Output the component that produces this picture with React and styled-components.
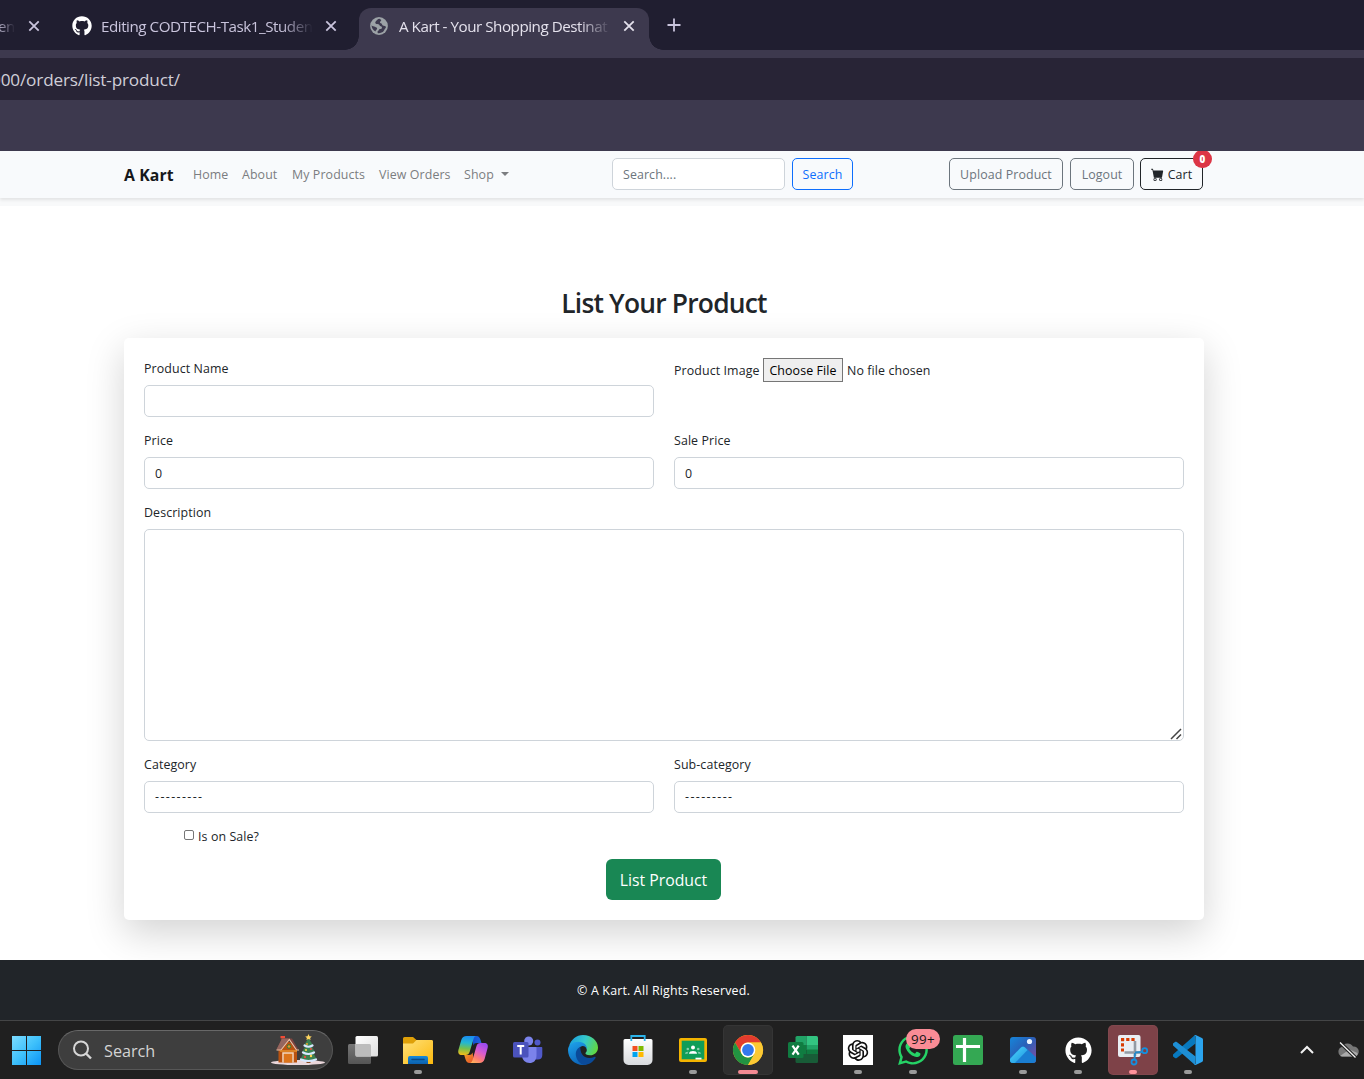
import React from "react";
import styled, { createGlobalStyle } from "styled-components";
import { FaGithub, FaWhatsapp } from "react-icons/fa";
import { BsCartFill } from "react-icons/bs";
import { AiOutlineOpenAI } from "react-icons/ai";

const GlobalStyle = createGlobalStyle`
  *, *::before, *::after { box-sizing: border-box; }
  body {
    margin: 0;
    overflow: hidden;
    background: #fff;
    color: #212529;
    font-family: "Open Sans", "Noto Sans", sans-serif;
    font-size: 12.4px;
    line-height: 20px;
    letter-spacing: 0.1px;
  }
  input, select, textarea, button { font: inherit; letter-spacing: inherit; color: inherit; }
`;

const Screen = styled.div`
  width: 1364px;
  height: 1079px;
  display: flex;
  flex-direction: column;
  overflow: hidden;
`;

/* Browser chrome */
const TabStrip = styled.div`
  height: 50px;
  flex: none;
  display: flex;
  align-items: flex-end;
  background: #201e30;
  color: #c9c4dc;
  font-size: 15.2px;
  letter-spacing: -0.47px;
`;
const Tab = styled.div`
  position: relative;
  width: ${(p) => p.$w}px;
  height: 42px;
  padding: 0 ${(p) => p.$pr || 14}px 7px ${(p) => p.$pl}px;
  display: flex;
  align-items: center;
  border-radius: 12px 12px 0 0;
  background: ${(p) => (p.$active ? "#3d394e" : "transparent")};
  color: ${(p) => (p.$active ? "#e4e1ec" : "inherit")};
  &::before, &::after {
    content: "";
    display: ${(p) => (p.$active ? "block" : "none")};
    position: absolute;
    bottom: 0;
    width: 14px;
    height: 14px;
  }
  &::before { left: -14px; background: radial-gradient(circle at 0 0, transparent 13.5px, #3d394e 14px); }
  &::after { right: -14px; background: radial-gradient(circle at 100% 0, transparent 13.5px, #3d394e 14px); }
`;
const TabTitle = styled.span`
  width: ${(p) => p.$w}px;
  margin-left: ${(p) => p.$ml}px;
  white-space: nowrap;
  mask-image: linear-gradient(to right, #000 calc(100% - ${(p) => p.$fade || 32}px), transparent);
`;
const TabClose = styled.svg`
  width: 12px;
  height: 12px;
  margin-left: auto;
  flex: none;
`;
const NewTab = styled.svg`
  width: 14px;
  height: 14px;
  margin: 0 0 18px 18px;
`;
const Toolbar = styled.div`
  height: 101px;
  flex: none;
  padding-top: 8px;
  background: #3d394e;
`;
const AddressBar = styled.div`
  height: 42px;
  display: flex;
  align-items: center;
  padding-top: 1px;
  background: #282436;
  color: #d0ced8;
  font-size: 17.2px;
  letter-spacing: -0.17px;
  text-indent: -9px;
  white-space: nowrap;
`;

/* Site header */
const Header = styled.header`
  height: 55px;
  flex: none;
  background: #f8f9fa;
  overflow: hidden;
`;
const Navbar = styled.nav`
  height: 47px;
  display: flex;
  align-items: center;
  padding: 0 161px 0 124px;
  background: #f8fafc;
  box-shadow: 0 1.6px 3.2px rgba(0, 0, 0, 0.09);
`;
const Brand = styled.span`
  width: 69px;
  font-size: 15.8px;
  font-weight: 700;
  color: #16181b;
`;
const NavLinks = styled.div`
  display: flex;
  gap: 13px;
  width: 419px;
  color: #7b7d80;
  white-space: nowrap;
`;
const NavLink = styled.span`
  width: ${(p) => (p.$w ? p.$w + "px" : "auto")};
`;
const Caret = styled.i`
  display: inline-block;
  margin-left: 4px;
  vertical-align: 3px;
  border: 4px solid transparent;
  border-top-color: currentColor;
  border-bottom: 0;
`;
const SearchInput = styled.input`
  width: 173px;
  height: 32px;
  margin: 0 7px 2px 0;
  padding: 1px 10px 0;
  border: 1px solid #ced4da;
  border-radius: 5px;
  background: #fff;
  &::placeholder { color: #6c757d; opacity: 1; }
`;
const TONES = { blue: "#0d6efd", gray: "#6c757d", dark: "#212529" };
const OutlineButton = styled.button`
  position: relative;
  width: ${(p) => p.$w}px;
  height: 32px;
  margin: 0 0 2px;
  padding: 2px 0 0;
  display: flex;
  align-items: center;
  justify-content: center;
  gap: 4px;
  border: 1px solid ${(p) => TONES[p.$tone]};
  border-radius: 5px;
  background: transparent;
  color: ${(p) => TONES[p.$tone]};
  white-space: nowrap;
`;
const NavActions = styled.div`
  display: flex;
  gap: 7px;
  margin-left: auto;
  & > :last-child { margin-left: -1px; }
`;
const CartBadge = styled.span`
  position: absolute;
  left: 52px;
  top: -9px;
  width: 19px;
  height: 18px;
  border-radius: 9px;
  background: #dc3545;
  color: #fff;
  font-size: 9.8px;
  font-weight: 800;
  line-height: 20px;
  text-align: center;
`;

/* Product form */
const Main = styled.main`
  height: 754px;
  flex: none;
  padding: 80px 160px 40px 124px;
  overflow: hidden;
`;
const Title = styled.h2`
  margin: 0 0 18px;
  font-size: 26.4px;
  font-weight: 600;
  line-height: 34px;
  letter-spacing: -0.8px;
  text-align: center;
`;
const Card = styled.form`
  height: 582px;
  padding: 20px;
  border-radius: 5px;
  background: #fff;
  box-shadow: 0 12.8px 38.4px rgba(0, 0, 0, 0.175);
`;
const Row = styled.div`
  display: grid;
  grid-template-columns: ${(p) => (p.$single ? "1fr" : "1fr 1fr")};
  column-gap: 20px;
  margin-bottom: 13px;
`;
const Field = styled.label`
  position: relative;
  display: flex;
  flex-direction: column;
  gap: 6px;
  padding-top: 1px;
`;
const Control = styled.input`
  display: block;
  width: 100%;
  height: 32px;
  padding: 0 10px;
  border: 1px solid #ced4da;
  border-radius: 5px;
  background: #fff;
  outline: none;
  appearance: none;
`;
const Select = styled(Control)`
  letter-spacing: 1.4px;
`;
const TextArea = styled(Control)`
  height: 212px;
  resize: none;
`;
const ResizeGrip = styled.svg`
  position: absolute;
  right: 2px;
  bottom: 1px;
  width: 12px;
  height: 12px;
`;
const FileField = styled.div`
  display: flex;
  align-items: center;
  height: 24px;
  white-space: nowrap;
`;
const FileText = styled.span`
  width: ${(p) => (p.$w ? p.$w + "px" : "auto")};
  padding-top: 1px;
`;
const FileButton = styled.button`
  width: 80px;
  height: 24px;
  margin: 0 4px 0 0;
  padding: 1px 0 0;
  border: 1px solid #767676;
  border-radius: 0;
  background: #efefef;
  color: #000;
`;
const CheckRow = styled.label`
  display: flex;
  align-items: center;
  height: 20px;
  margin: 0 0 13px 40px;
  padding-top: 2px;
`;
const CheckBox = styled.input`
  width: 10px;
  height: 10px;
  margin: 0 4px 4px 0;
  appearance: none;
  border: 1px solid #767676;
  border-radius: 2px;
`;
const Submit = styled.button`
  display: block;
  width: 115px;
  height: 41px;
  margin: 0 0 0 462px;
  padding: 0;
  border: 0;
  border-radius: 6px;
  background: #198754;
  color: #fff;
  font-size: 15.8px;
  letter-spacing: -0.02px;
`;
const Footer = styled.footer`
  height: 60px;
  flex: none;
  display: flex;
  align-items: center;
  justify-content: center;
  padding: 2px 37px 0 0;
  background: #212529;
  color: #fff;
  letter-spacing: 0.18px;
`;

/* Desktop taskbar */
const Taskbar = styled.div`
  height: 59px;
  flex: none;
  display: flex;
  align-items: center;
  padding-left: 12px;
  border-top: 1px solid #444546;
  background: #202020;
  letter-spacing: 0;
`;
const StartIcon = styled.svg`
  width: 29px;
  height: 29px;
  margin-right: 17px;
`;
const TaskSearch = styled.div`
  width: 275px;
  height: 40px;
  display: flex;
  align-items: center;
  padding: 0 6px 0 14px;
  border: 1px solid #575757;
  border-top-color: #686868;
  border-radius: 20px;
  background: #3e3e3e;
  color: #d4d4d4;
  font-size: 16.2px;
`;
const SearchText = styled.span`
  padding-top: 2px;
`;
const SearchGlyph = styled.svg`
  width: 20px;
  height: 20px;
  margin-right: 11px;
`;
const Festive = styled.svg`
  width: 56px;
  height: 32px;
  margin-left: auto;
`;
const Apps = styled.div`
  display: flex;
  gap: 5px;
  margin-left: 5px;
`;
const AppSlot = styled.div`
  position: relative;
  width: 50px;
  height: 50px;
  display: flex;
  align-items: center;
  justify-content: center;
  border-radius: 5px;
  background: ${(p) => p.$bg || "transparent"};
  box-shadow: ${(p) => (p.$bg ? "inset 0 0 0 1px rgba(255,255,255,.035)" : "none")};
`;
const AppIcon = styled.svg.attrs({ viewBox: "0 0 30 30" })`
  width: 30px;
  height: 30px;
  overflow: visible;
`;
const Indicator = styled.i`
  position: absolute;
  bottom: 1px;
  left: 50%;
  width: ${(p) => p.$w || 8}px;
  height: 4px;
  transform: translateX(-50%);
  border-radius: 2px;
  background: ${(p) => p.$color || "#9a9a9a"};
`;
const UnreadBadge = styled.span`
  position: absolute;
  left: 18px;
  top: 4px;
  width: 34px;
  height: 20px;
  border-radius: 10px;
  background: #f98c96;
  color: #141414;
  font-size: 13.4px;
  line-height: 20px;
  letter-spacing: 0.3px;
  text-align: center;
`;
const Tray = styled.div`
  display: flex;
  align-items: center;
  gap: 22px;
  margin-left: auto;
  margin-right: -6px;
`;
const TrayIcon = styled.svg`
  width: ${(p) => p.$w}px;
  height: 20px;
`;

const CloseIcon = () => (
  <TabClose viewBox="0 0 12 12" stroke="currentColor" strokeWidth="1.8">
    <path d="M1.3 1.3 10.7 10.7M10.7 1.3 1.3 10.7" />
  </TabClose>
);

const Globe = () => (
  <svg width="18" height="18" viewBox="0 0 18 18">
    <circle cx="9" cy="9" r="8.900" fill="#9ca2a6" />
    <path d="M9.500 1.800C7.500 1.900 7 3.400 5.700 4.400 4.900 5.200 5.200 6.500 6.400 6.900c1.500.3 2.700 0 3 1.200.1 1.600 2.400.9 2.600 2.300 0 1.100-1 1.400-2 1.500-1.300.2-1 1.500-2 2.200-.8.600-.6 1.400 0 2.100 2 .300 4.600-.8 5.700-2.200.8-1 .7-2.300 2-3.100.5-.9.100-1.900-.9-2-1.600-.1-2.700-.4-2.900-1.800-.2-1.200-1.900-.5-1.900-1.700 0-1.100 1.100-1.300 1.300-2.400ZM1.600 8.200c.8 1.200 2.400.9 3.400 1.600 1 .8 2.300.7 2.100 2-.4 1.200-1.600 1.600-1.700 2.700-2.500-1.300-3.900-3.800-3.800-6.300Z" fill="#3d394e" />
  </svg>
);

const GithubMark = () => <FaGithub size={20} color="#fff" />;

const TaskView = () => (
  <AppIcon>
    <defs>
      <linearGradient id="tvA" x2="1" y2="1"><stop stopColor="#fff" /><stop offset="1" stopColor="#dedede" /></linearGradient>
      <linearGradient id="tvB" x2="0" y2="1"><stop stopColor="#777" /><stop offset="1" stopColor="#555" /></linearGradient>
    </defs>
    <rect x="0" y="9" width="23" height="20" rx="1.5" fill="url(#tvB)" />
    <rect x="7.5" y="1" width="22.5" height="20.5" rx="1.5" fill="url(#tvA)" />
    <path d="M7.5 9H21.500a1.500 1.500 0 0 1 1.500 1.500V21.500H9a1.500 1.500 0 0 1-1.500-1.500Z" fill="#bcbcbc" />
  </AppIcon>
);
const Explorer = () => (
  <AppIcon>
    <defs>
      <linearGradient id="exA" x2="1" y2="1"><stop stopColor="#ffe17a" /><stop offset="1" stopColor="#fcb90d" /></linearGradient>
      <linearGradient id="exB" x2="0" y2="1"><stop stopColor="#168ada" /><stop offset="1" stopColor="#0c60ad" /></linearGradient>
    </defs>
    <path d="M0 3.500A1.500 1.500 0 0 1 1.500 2H10l3.500 3H28a2 2 0 0 1 2 2v5H0Z" fill="#dfa008" />
    <path d="M0 8.500h10L13.500 5H28.500A1.500 1.500 0 0 1 30 6.500V29H0Z" fill="url(#exA)" />
    <path d="M5 29v-6.200A1.800 1.800 0 0 1 6.800 21h16.400a1.800 1.800 0 0 1 1.800 1.800V29Z" fill="url(#exB)" />
    <path d="M9 24.500h12" stroke="#0a4a86" strokeWidth="1.500" strokeLinecap="round" />
  </AppIcon>
);
const Copilot = () => (
  <AppIcon>
    <defs>
      <linearGradient id="cpA" x1=".4" x2=".3" y2="1"><stop stopColor="#1b8df0" /><stop offset=".35" stopColor="#23b7d2" /><stop offset=".65" stopColor="#72c04f" /><stop offset="1" stopColor="#f2bd19" /></linearGradient>
      <linearGradient id="cpB" x1=".7" x2=".2" y2="1"><stop stopColor="#9a4bf0" /><stop offset=".4" stopColor="#d75bd0" /><stop offset=".75" stopColor="#ff7c72" /><stop offset="1" stopColor="#ffb25b" /></linearGradient>
      <linearGradient id="cpC" x2="1"><stop stopColor="#124bd0" /><stop offset="1" stopColor="#1f69df" /></linearGradient>
      <linearGradient id="cpD" x2="1" y2="1"><stop stopColor="#f5a324" /><stop offset="1" stopColor="#e34a2d" /></linearGradient>
    </defs>
    <path d="M14 1h4.500c2.200 0 3.200 1.500 3.900 3.600L23.500 8h-5c-1.700 0-2.600.8-3.100 2.500Z" fill="url(#cpC)" />
    <path d="M16.500 28h-5c-2.200 0-3.300-1.300-4-3.700L6.200 20h5c1.700 0 2.700-.8 3.300-2.500Z" fill="url(#cpD)" />
    <path d="M8.700 1H18c-1.600.5-2.100 1.900-2.600 3.500l-3.700 12.300c-.8 2.400-1.900 3.200-4 3.200H3.500C.7 20-.2 17.800.4 15L3.300 5C4.100 2.300 5.800 1 8.700 1Z" fill="url(#cpA)" />
    <path d="M21.300 28H12c1.600-.5 2.200-1.900 2.700-3.600l3.600-12.700c.7-2.700 2-3.700 4.200-3.700h4c2.900 0 3.900 2.200 3.100 5l-3 11C25.800 26.800 24.100 28 21.300 28Z" fill="url(#cpB)" />
  </AppIcon>
);
const Teams = () => (
  <AppIcon>
    <circle cx="24.500" cy="7.500" r="3" fill="#5059c9" />
    <path d="M20 12h8.300c.6 0 1 .4 1 1v7c0 3-1.800 4.500-4.500 4.500H20Z" fill="#5059c9" />
    <circle cx="15.700" cy="6" r="4.500" fill="#7b83eb" />
    <path d="M9 12h13.500c.6 0 1 .4 1 1v7.500c0 5-3 7.500-7 7.500s-7.500-3-7.500-7.500Z" fill="#7b83eb" />
    <rect x="0" y="7" width="15.500" height="15.500" rx="1.500" fill="#4b53bc" />
    <path d="M4.200 11h7M7.700 11v8.500" stroke="#fff" strokeWidth="2" />
  </AppIcon>
);
const Edge = () => (
  <AppIcon>
    <defs>
      <linearGradient id="egA" x1="0" y1=".3" x2="1" y2=".6"><stop stopColor="#1c9fe0" /><stop offset=".5" stopColor="#35c9c9" /><stop offset="1" stopColor="#62d83e" /></linearGradient>
      <linearGradient id="egB" x2=".5" y2="1"><stop stopColor="#1fa5ed" /><stop offset="1" stopColor="#0b63b8" /></linearGradient>
    </defs>
    <path d="M1 11C3 4.500 8.500 0 15 0c8.500 0 15 6 15 12.500 0 4.800-3.700 7.800-8 7.800-3.300 0-5-1-4.500-2.200.3-.8 1.300-1.300 1.300-3.100 0-3.500-3.800-6.200-8.300-6.200C6 8.800 3 9.600 1 11Z" fill="url(#egA)" />
    <path d="M0 15C0 10 5 6.800 10.500 6.800c5.500 0 8.800 3.800 8.300 7.500C18 12 16 10.800 14 11.200c-3 .6-4.500 4-3.700 7.200 1.300 5.300 7 8.500 12 7.700C20.500 28.500 18 30 15 30 6.700 30 0 23.500 0 15Z" fill="url(#egB)" />
    <path d="M12.200 12c-4 2-5.300 6-3.800 10.500C9.700 26.300 12.700 29.500 16.500 30c4.500-.3 8.500-3 10.900-6.700.7-1-.2-1.800-1.300-1.300-4.500 2-10 .9-12.200-3-1.300-2.300-1.600-5.500-1.700-7Z" fill="#0a4a99" />
  </AppIcon>
);
const Store = () => (
  <AppIcon>
    <defs><linearGradient id="stA" x2="0" y2="1"><stop stopColor="#fff" /><stop offset="1" stopColor="#d8dadd" /></linearGradient></defs>
    <path d="M.500 5.500A1.500 1.500 0 0 1 2 4h26a1.500 1.500 0 0 1 1.500 1.500V25a5 5 0 0 1-5 5h-19a5 5 0 0 1-5-5Z" fill="url(#stA)" />
    <path d="M8.300 6V1h13.400v5" fill="none" stroke="#2bb4eb" strokeWidth="1.800" />
    <path fill="#f25022" d="M9.500 11h5v5h-5Z" /><path fill="#7fba00" d="M15.500 11h5v5h-5Z" />
    <path fill="#00a4ef" d="M9.500 17h5v5h-5Z" /><path fill="#ffb900" d="M15.500 17h5v5h-5Z" />
  </AppIcon>
);
const Classroom = () => (
  <AppIcon>
    <rect x="1" y="3" width="28" height="24" rx="2" fill="#f4b400" />
    <rect x="3.700" y="5.700" width="22.600" height="18.600" fill="#0f9d58" />
    <circle cx="15" cy="12.500" r="2" fill="#fff" /><circle cx="9.800" cy="14" r="1.300" fill="#87ceac" /><circle cx="20.200" cy="14" r="1.300" fill="#87ceac" />
    <path d="M11 18.700c0-2 2-2.700 4-2.700s4 .7 4 2.700Z" fill="#fff" />
    <path d="M7 18.700c0-1.500 1.500-2.200 3.700-2-1 .6-1 1-1 2ZM23 18.700c0-1.500-1.500-2.200-3.700-2 1 .6 1 1 1 2Z" fill="#87ceac" />
    <path d="M17.500 22.700h6v1.800h-6Z" fill="#fff" />
  </AppIcon>
);
const Chrome = () => (
  <AppIcon>
    <circle cx="15" cy="15" r="15" fill="#fbc116" />
    <path d="M2 7.500A15 15 0 0 1 28 7.500H15A7.500 7.500 0 0 0 8.500 18.750Z" fill="#e33b2e" />
    <path d="M2 7.500 8.500 18.750A7.500 7.500 0 0 0 15 22.500q3.500 0 6.500-3.750L15 30A15 15 0 0 1 2 7.500Z" fill="#229342" />
    <path d="M15 7.500h13A15 15 0 0 1 15 30l6.500-11.250A7.500 7.500 0 0 0 15 7.500Z" fill="#fcc934" />
    <circle cx="15" cy="15" r="7.400" fill="#fff" /><circle cx="15" cy="15" r="5.900" fill="#3478ec" />
  </AppIcon>
);
const Excel = () => (
  <AppIcon>
    <path d="M7.500 2.500A1.500 1.500 0 0 1 9 1h9.500v9h-11Z" fill="#21a366" /><path d="M18.500 1h10A1.500 1.500 0 0 1 30 2.500V10H18.500Z" fill="#33c481" />
    <path d="M7.500 10h11v9h-11Z" fill="#107c41" /><path d="M18.500 10H30v5H18.500Z" fill="#21a366" />
    <path d="M18.500 14.500H30v5H18.500Z" fill="#107c41" />
    <path d="M7.500 19H30v7.500a1.500 1.500 0 0 1-1.500 1.500H9a1.500 1.500 0 0 1-1.500-1.500Z" fill="#185c37" />
    <rect x="0" y="7" width="15.500" height="16" rx="1.500" fill="#107c41" />
    <path d="M4.500 10.700l6.200 9M10.700 10.700l-6.200 9" stroke="#fff" strokeWidth="2.200" />
  </AppIcon>
);
const OpenAi = () => (
  <AppIcon>
    <path d="M0 0h30v30H0Z" fill="#fff" />
    <AiOutlineOpenAI x="1.500" y="1.500" size={27} color="#111" />
  </AppIcon>
);
const Sheet = () => (
  <AppIcon>
    <rect width="30" height="30" rx="2.500" fill="#34a853" />
    <path d="M3 11.500h24M11.500 3v24" stroke="#fff" strokeWidth="3.200" />
  </AppIcon>
);
const Photos = () => (
  <AppIcon>
    <defs>
      <linearGradient id="phA" x2="1" y2="1"><stop stopColor="#1686da" /><stop offset=".45" stopColor="#2860b8" /><stop offset="1" stopColor="#8a4c9f" /></linearGradient>
      <linearGradient id="phB" x2="1" y2="1"><stop stopColor="#55ddff" /><stop offset="1" stopColor="#168ddd" /></linearGradient>
      <clipPath id="phC"><rect x="2" y="2" width="26" height="26" rx="3" /></clipPath>
    </defs>
    <g clipPath="url(#phC)">
      <path d="M2 2h26v26H2Z" fill="url(#phA)" />
      <path d="M0 25 13 12.200q2-1.900 4 0L31 25v5H0Z" fill="#1a7ed2" />
      <path d="M0 26 12.500 13q2.500-2.500 5 0l2 2L6 29H0Z" fill="url(#phB)" />
    </g>
    <circle cx="21.500" cy="6.500" r="2.600" fill="#eaf4ff" />
  </AppIcon>
);
const GithubDesktop = () => <FaGithub size={27} color="#fff" />;
const Snip = () => (
  <AppIcon>
    <rect x="0" y="0" width="22.500" height="22" rx="2" fill="#e9eef3" />
    <path d="M3 4.500h14M4.500 3v14" fill="none" stroke="#d83b01" strokeWidth="3" strokeDasharray="3.200 2" />
    <path d="M17 6v15M6.500 17.500H22" stroke="#939ba4" strokeWidth="2.600" />
    <path d="m17 17.500 7-.5M17 18l-.5 6" stroke="#2589c7" strokeWidth="2" />
    <circle cx="26.700" cy="15.700" r="2.500" fill="none" stroke="#1490df" strokeWidth="1.800" />
    <circle cx="16" cy="27" r="2.500" fill="none" stroke="#1490df" strokeWidth="1.800" />
  </AppIcon>
);
const VsCode = () => (
  <AppIcon>
    <path d="M22 0 0 19.500v2L2 23c.6.400 1.300.300 1.800-.1L22.500 8.500Z" fill="#0879be" />
    <path d="M22 30 0 10.500v-2L2 7c.6-.4 1.300-.3 1.800.1L22.500 21.500Z" fill="#1e8fd5" />
    <path d="M21 29.700c.8.400 1.500.300 2.200 0l5.700-2.800c.7-.300 1.100-1 1.100-1.700V4.800c0-.7-.4-1.400-1.100-1.700L23.200.300c-.7-.3-1.400-.4-2.200 0 .9-.2 1.500.5 1.500 1.400v26.600c0 .9-.6 1.600-1.500 1.400Z" fill="#2ba4ee" />
  </AppIcon>
);
const WhatsApp = () => <FaWhatsapp size={34} color="#25d366" />;

const APPS = [
  { icon: TaskView },
  { icon: Explorer, running: true },
  { icon: Copilot },
  { icon: Teams },
  { icon: Edge },
  { icon: Store },
  { icon: Classroom, running: true },
  { icon: Chrome, running: true, bg: "#2e2e2e", color: "#f38a93", wide: 20 },
  { icon: Excel },
  { icon: OpenAi, running: true },
  { icon: WhatsApp, running: true, badge: "99+" },
  { icon: Sheet },
  { icon: Photos, running: true },
  { icon: GithubDesktop, running: true },
  { icon: Snip, running: true, bg: "#7e4248", color: "#ff929b" },
  { icon: VsCode, running: true },
];

const LINKS = [["Home", 36], ["About", 37], ["My Products", 74], ["View Orders", 72]];

function BrowserTop() {
  return (
    <>
      <TabStrip>
        <Tab $w={54} $pl={0}>
          <TabTitle $w={17} $ml={-2} $fade={18}>en</TabTitle>
          <CloseIcon />
        </Tab>
        <Tab $w={305} $pl={18} $pr={22}>
          <GithubMark />
          <TabTitle $w={212} $ml={9}>Editing CODTECH-Task1_Studen</TabTitle>
          <CloseIcon />
        </Tab>
        <Tab $w={290} $pl={11} $active>
          <Globe />
          <TabTitle $w={212} $ml={11}>A Kart - Your Shopping Destinat</TabTitle>
          <CloseIcon />
        </Tab>
        <NewTab viewBox="0 0 14 14" stroke="currentColor" strokeWidth="1.8"><path d="M7 .5v13M.5 7h13" /></NewTab>
      </TabStrip>
      <Toolbar>
        <AddressBar>000/orders/list-product/</AddressBar>
      </Toolbar>
    </>
  );
}

function SiteHeader() {
  return (
    <Header>
      <Navbar>
        <Brand>A Kart</Brand>
        <NavLinks>
          {LINKS.map(([label, w]) => <NavLink key={label} $w={w}>{label}</NavLink>)}
          <NavLink>Shop <Caret /></NavLink>
        </NavLinks>
        <SearchInput placeholder="Search...." />
        <OutlineButton $w={61} $tone="blue">Search</OutlineButton>
        <NavActions>
          <OutlineButton $w={114} $tone="gray">Upload Product</OutlineButton>
          <OutlineButton $w={64} $tone="gray">Logout</OutlineButton>
          <OutlineButton $w={63} $tone="dark">
            <BsCartFill size={13} />Cart
            <CartBadge>0</CartBadge>
          </OutlineButton>
        </NavActions>
      </Navbar>
    </Header>
  );
}

function ProductForm() {
  return (
    <Main>
      <Title>List Your Product</Title>
      <Card>
        <Row>
          <Field>Product Name<Control /></Field>
          <FileField>
            <FileText $w={89}>Product Image</FileText>
            <FileButton type="button">Choose File</FileButton>
            <FileText>No file chosen</FileText>
          </FileField>
        </Row>
        <Row>
          <Field>Price<Control defaultValue="0" /></Field>
          <Field>Sale Price<Control defaultValue="0" /></Field>
        </Row>
        <Row $single>
          <Field>
            Description
            <TextArea as="textarea" />
            <ResizeGrip viewBox="0 0 12 12" stroke="#444" strokeWidth="1.500"><path d="M1 11 11 1M6.500 11 11 6.500" /></ResizeGrip>
          </Field>
        </Row>
        <Row>
          <Field>Category<Select as="select"><option>---------</option></Select></Field>
          <Field>Sub-category<Select as="select"><option>---------</option></Select></Field>
        </Row>
        <CheckRow><CheckBox type="checkbox" />Is on Sale?</CheckRow>
        <Submit type="button">List Product</Submit>
      </Card>
    </Main>
  );
}

function DesktopTaskbar() {
  return (
    <Taskbar>
      <StartIcon viewBox="0 0 29 29">
        <defs><linearGradient id="win" x2="1" y2="1"><stop stopColor="#7ddcff" /><stop offset=".5" stopColor="#3fc1fb" /><stop offset="1" stopColor="#0b93f5" /></linearGradient></defs>
        <path d="M0 0h14v14H0ZM15 0h14v14H15ZM0 15h14v14H0ZM15 15h14v14H15Z" fill="url(#win)" />
      </StartIcon>
      <TaskSearch>
        <SearchGlyph viewBox="0 0 20 20" fill="none" stroke="#d6d6d6" strokeWidth="2">
          <circle cx="8" cy="8.500" r="7" /><path d="m13 13.500 5 5" strokeWidth="2.400" />
        </SearchGlyph>
        <SearchText>Search</SearchText>
        <Festive viewBox="0 0 56 32">
          <ellipse cx="28" cy="28.500" rx="27" ry="2.600" fill="#ead7db" />
          <path d="M11 3h3.500v7H11Z" fill="#8c3c2c" /><path d="M10.500 2h4.500v2.200h-4.500Z" fill="#f04b36" />
          <path d="M8.500 13 17 6l10 8v14.500H8.500Z" fill="#b9520f" />
          <path d="M6.500 15.500 12 4.500h10L28 15l-2.500 1L19.500 6.500l-8.500 10Z" fill="#7e4440" />
          <path d="M6.500 15.500 12 4.500h7l-8 11.500Z" fill="#95665f" />
          <path d="M6.500 16H11l8.300-10.500L26.500 16H29" fill="none" stroke="#f0c4a4" strokeWidth="1.100" />
          <path d="M14 19h8v9.500h-8Z" fill="#dc741b" /><path d="M13 28.500V19h10v9.500" fill="none" stroke="#f5d8bd" strokeWidth="1.500" />
          <circle cx="19" cy="12.500" r="1.800" fill="#e8952a" stroke="#2c7f40" /><path d="M10 17h17" stroke="#ef9b31" strokeWidth="1.300" />
          <path d="M36.500 25h4v4h-4Z" fill="#8a4c24" />
          <path d="m38.500 4 5 8h-2l4 7h-2l3.500 7H30l3.500-7h-2l4-7h-2Z" fill="#3b8050" />
          <path d="M34.500 11.500q4 2.500 8 0M33 18.500q5.500 3 11 0M31 25.500q7.500 3 15 0" fill="none" stroke="#d7e8ff" strokeWidth="2.200" strokeLinecap="round" />
          <path d="m38.500 0 1 2.200 2.300.2-1.700 1.500.5 2.200-2.100-1.200-2.100 1.200.5-2.200-1.700-1.500 2.300-.2Z" fill="#ffd45f" />
          <circle cx="37" cy="10" r="1" fill="#f0a632" /><circle cx="41" cy="15" r="1.100" fill="#e24d42" /><circle cx="36" cy="16" r="1.100" fill="#ffd34f" /><circle cx="35" cy="23" r="1.200" fill="#e24d42" /><circle cx="41" cy="22" r="1.200" fill="#ffd34f" />
        </Festive>
      </TaskSearch>
      <Apps>
        {APPS.map(({ icon: Icon, running, bg, color, wide, badge }) => (
          <AppSlot key={Icon.name} $bg={bg}>
            <Icon />
            {running && <Indicator $w={wide} $color={color} />}
            {badge && <UnreadBadge>{badge}</UnreadBadge>}
          </AppSlot>
        ))}
      </Apps>
      <Tray>
        <TrayIcon $w={16} viewBox="0 0 16 20"><path d="m2 13 6-6 6 6" fill="none" stroke="#f2f2f2" strokeWidth="2" /></TrayIcon>
        <TrayIcon $w={33} viewBox="0 0 33 20">
          <path d="M5 16.500a5 5 0 0 1-.3-9.500A6.500 6.500 0 0 1 16 6.500a5 5 0 0 1 1.500 10Z" fill="#777" />
          <path d="M3 16 12.500 9.500 20.500 13a3 3 0 0 1-2.500 3.500H5Z" fill="#aaa" />
          <path d="m3 2.500 15.500 15" stroke="#202020" strokeWidth="3.500" /><path d="m3 2.500 15.500 15" stroke="#f5f5f5" strokeWidth="1.300" />
        </TrayIcon>
      </Tray>
    </Taskbar>
  );
}

export default function App() {
  return (
    <>
      <GlobalStyle />
      <Screen>
        <BrowserTop />
        <SiteHeader />
        <ProductForm />
        <Footer>© A Kart. All Rights Reserved.</Footer>
        <DesktopTaskbar />
      </Screen>
    </>
  );
}
